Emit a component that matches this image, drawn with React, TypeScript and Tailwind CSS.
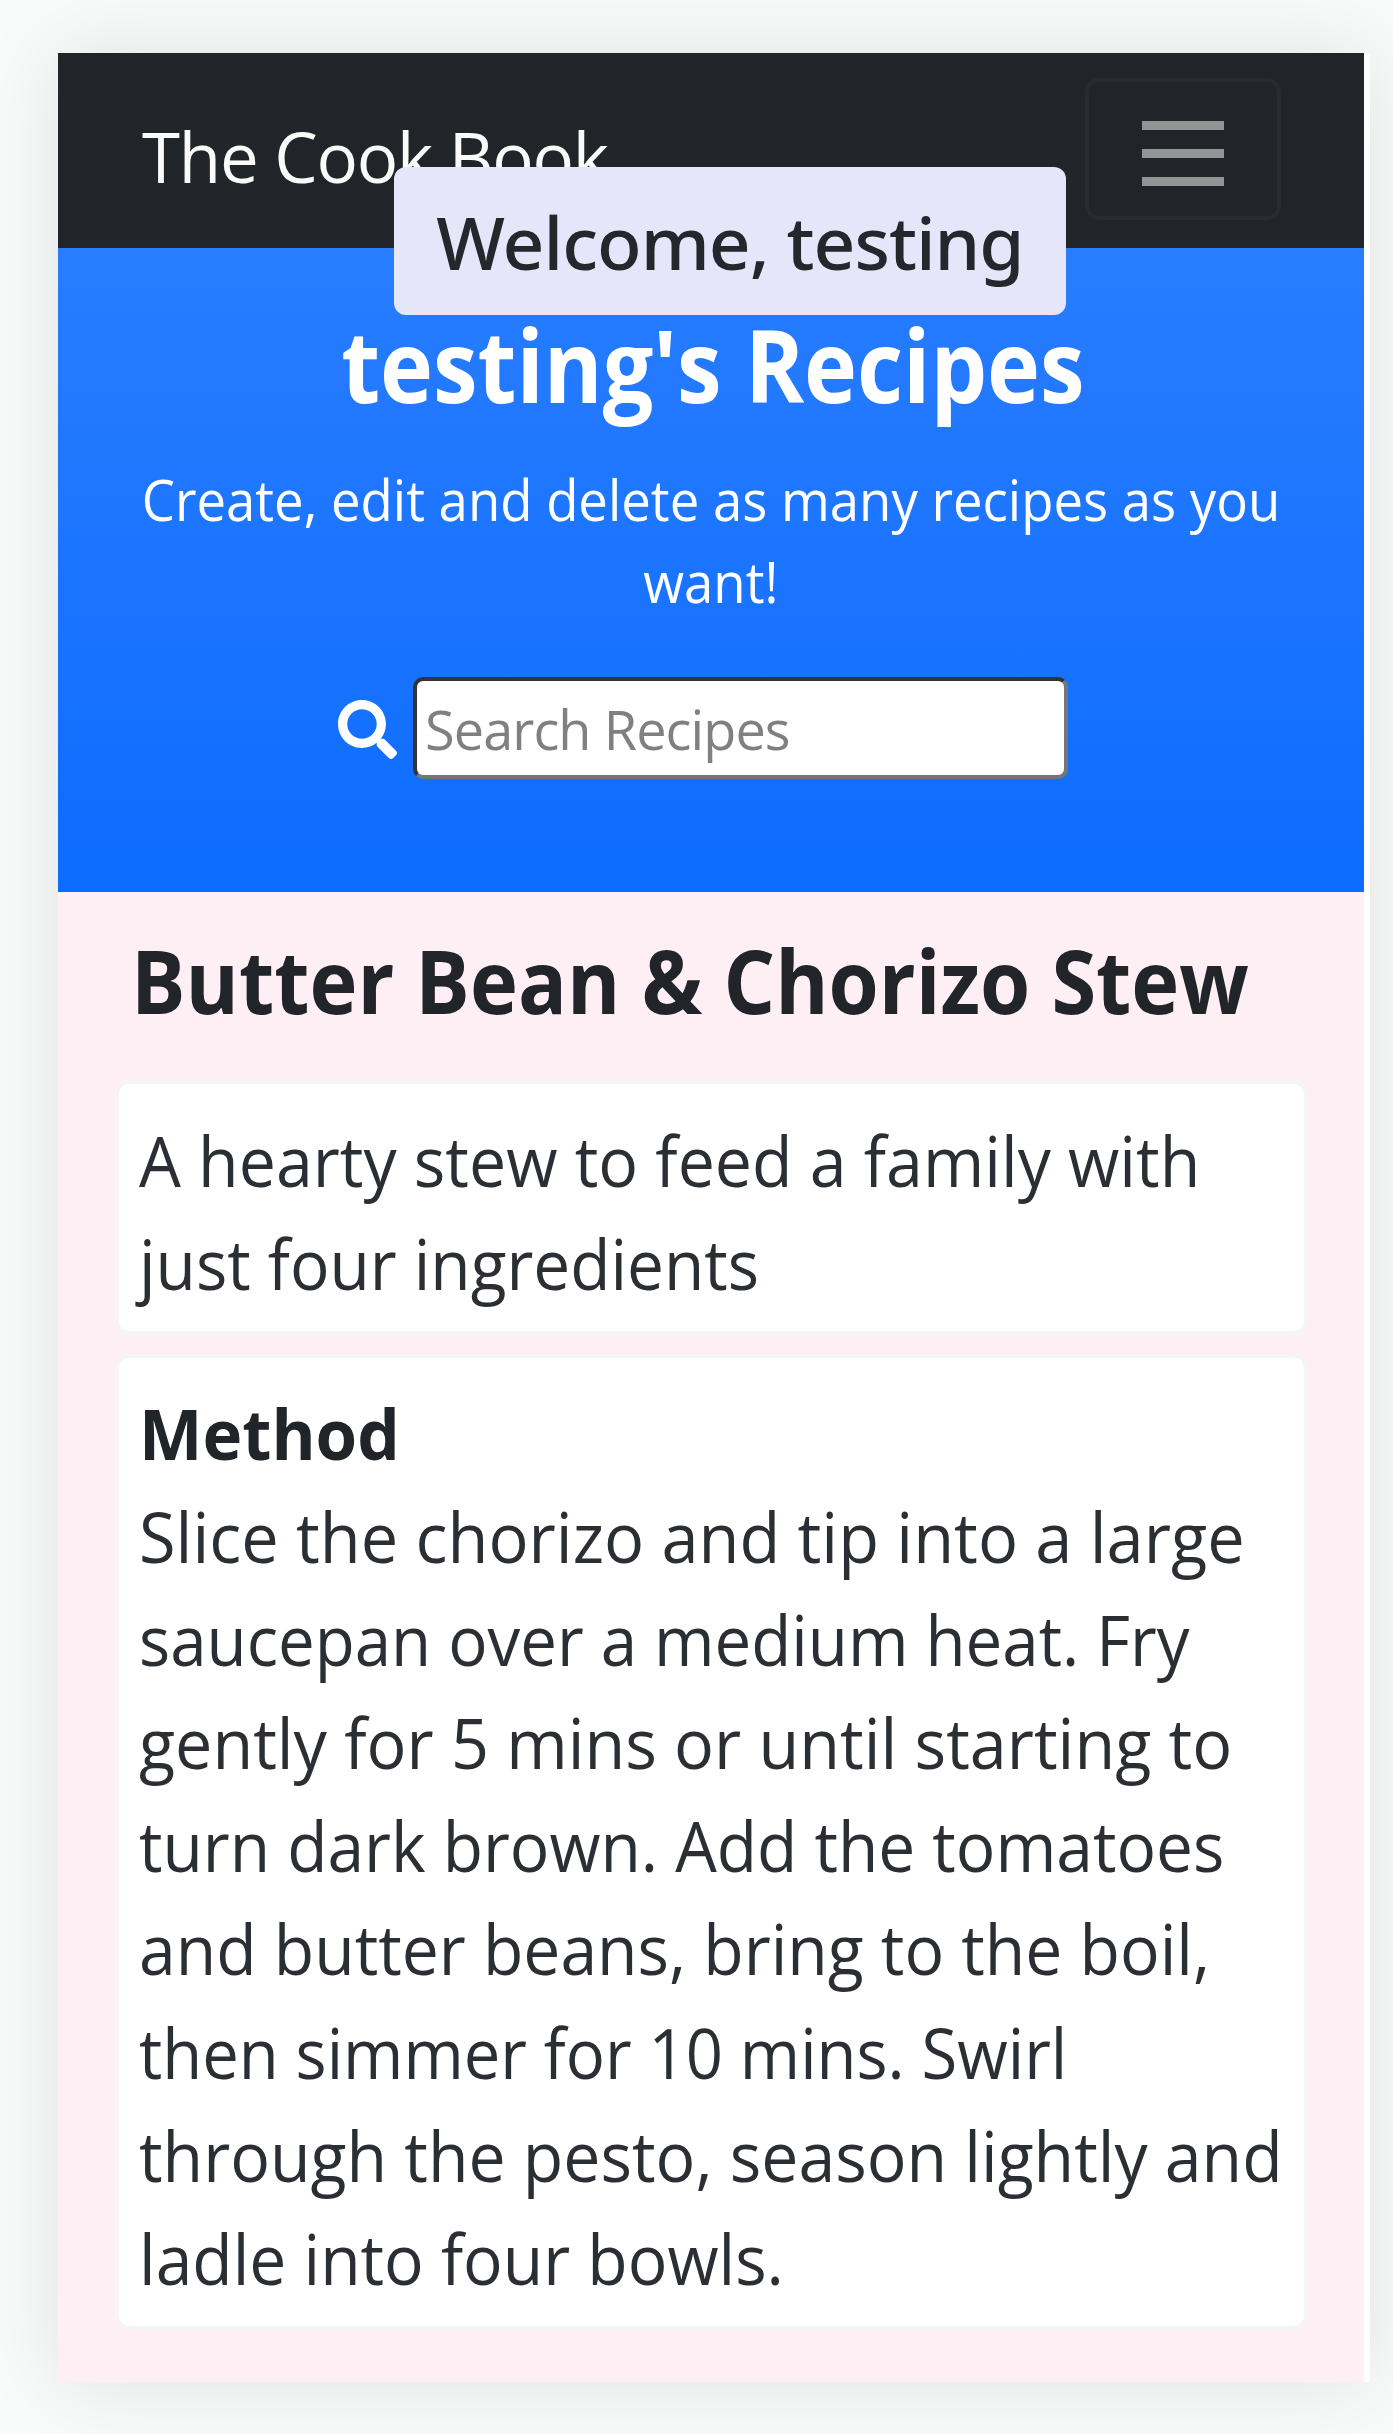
import { FaSearch } from "react-icons/fa";

const summary = [
  { text: "A hearty stew to feed a family with", fit: "scale-x-[0.96]" },
  { text: "just four ingredients", fit: "scale-x-[0.953]" },
];

const method = [
  { text: "Slice the chorizo and tip into a large", fit: "scale-x-[0.967]" },
  { text: "saucepan over a medium heat. Fry", fit: "scale-x-[0.948]" },
  { text: "gently for 5 mins or until starting to", fit: "scale-x-[0.963]" },
  { text: "turn dark brown. Add the tomatoes", fit: "scale-x-[0.954]" },
  { text: "and butter beans, bring to the boil,", fit: "scale-x-[0.957]" },
  { text: "then simmer for 10 mins. Swirl", fit: "scale-x-[0.944]" },
  { text: "through the pesto, season lightly and", fit: "scale-x-[0.959]" },
  { text: "ladle into four bowls.", fit: "scale-x-[0.956]" },
];

function Lines({ lines }: { lines: { text: string; fit: string }[] }) {
  return (
    <p className="text-[#2b2f33]">
      {lines.map((line) => (
        <span key={line.text} className={"block origin-left whitespace-nowrap " + line.fit}>
          {line.text}
        </span>
      ))}
    </p>
  );
}

function Navbar() {
  return (
    <nav className="relative flex h-[195px] items-center justify-between bg-[#212529] pr-[83px] pl-[84px]">
      <span className="mt-[11px] text-[69px] leading-[103px] tracking-[-1.2px] text-[#fafafa]">The Cook Book</span>
      <button className="mt-[-3px] flex h-[142px] w-[196px] flex-col items-center justify-center gap-[19px] rounded-[14px] border-4 border-[#282b2f] pt-[8px]">
        <span className="h-[9px] w-[82px] bg-[#939495]" />
        <span className="h-[9px] w-[82px] bg-[#939495]" />
        <span className="h-[9px] w-[82px] bg-[#939495]" />
      </button>
      <div className="absolute top-[114px] left-[336px] z-10 flex h-[148px] w-[672px] items-center justify-center rounded-[12px] bg-[#e6e6fa] pt-[2px] font-['Noto_Sans',sans-serif] text-[73px] font-medium tracking-[-1px] whitespace-nowrap text-[#24282c]">
        Welcome, testing
      </div>
    </nav>
  );
}

function Hero() {
  return (
    <header className="flex h-[644px] flex-col items-center bg-linear-to-b from-[#287dff] to-[#0b6cff] pt-[56px] text-white">
      <h1 className="ml-[3px] scale-x-[0.896] text-[100px] leading-[120px] font-bold whitespace-nowrap">testing's Recipes</h1>
      <p className="mt-[34px] flex flex-col items-center text-[56px] leading-[82px] whitespace-nowrap">
        <span className="block scale-x-[0.941]">Create, edit and delete as many recipes as you</span>
        <span className="block scale-x-[0.941]">want!</span>
      </p>
      <div className="mt-[55px] mr-[16px] flex items-center gap-[16px]">
        <FaSearch className="mt-[2px] size-[59px]" />
        <input
          placeholder="Search Recipes"
          className="h-[102px] w-[655px] rounded-[10px] border-4 border-t-[#343434] border-r-[#767676] border-b-[#767676] border-l-[#343434] bg-white pt-[2px] pl-[8px] text-[54px] tracking-[-0.9px] text-[#212529] placeholder:text-[#808080]"
        />
      </div>
    </header>
  );
}

export default function App() {
  return (
    <div className="h-[2434px] overflow-hidden bg-[#f9fbfa] pt-[53px] pl-[58px] font-['Open_Sans',sans-serif] text-[#212529]">
      <div className="h-[2329px] w-[1312px] bg-white pr-[6px] shadow-[0_0_80px_rgba(0,0,0,0.1)]">
        <div className="h-full bg-[#feeff4]">
          <Navbar />
          <Hero />
          <main className="px-[56px] pt-[22px] pl-[59px] text-[69px] leading-[103.1px]">
            <h2 className="ml-[14px] origin-left scale-x-[0.928] text-[87.5px] leading-[132px] font-bold whitespace-nowrap">
              Butter Bean &amp; Chorizo Stew
            </h2>
            <section className="mt-[34px] ml-[-2px] h-[255px] rounded-[14px] border-4 border-[#f6f5f6] bg-white pt-[25px] pl-[20px]">
              <Lines lines={summary} />
            </section>
            <section className="mt-[19px] ml-[-2px] h-[976px] rounded-[14px] border-4 border-[#f6f5f6] bg-white pt-[24px] pl-[20px]">
              <h3 className="origin-left scale-x-[0.975] font-bold">Method</h3>
              <Lines lines={method} />
            </section>
          </main>
        </div>
      </div>
    </div>
  );
}
